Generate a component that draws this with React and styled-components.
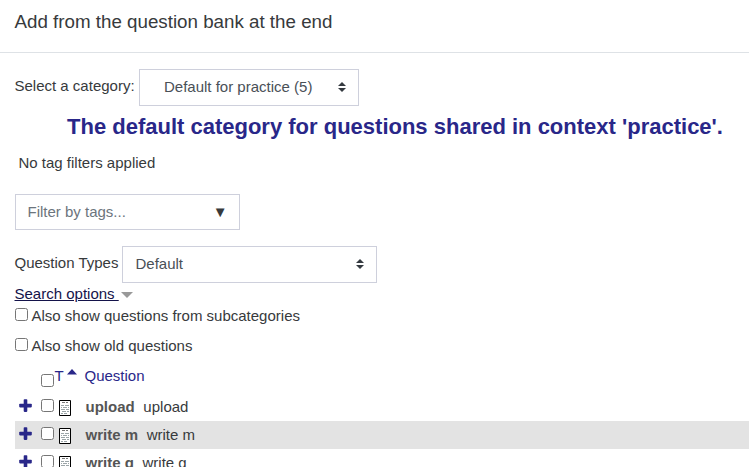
import React from "react";
import styled, { createGlobalStyle } from "styled-components";

const Global = createGlobalStyle`
  *, *::before, *::after { box-sizing: border-box; }
  body {
    margin: 0;
    background: #fff;
    color: #373a3c;
    font: 15px/22px "Liberation Sans", Arial, sans-serif;
  }
`;

const Dialog = styled.main`
  height: 467px;
  overflow: hidden;
`;

const Header = styled.header`
  height: 53px;
  padding: 8px 14.5px 0;
  border-bottom: 1px solid #dee2e6;
`;

const Title = styled.h1`
  margin: 0;
  font-size: 18.75px;
  line-height: 28px;
  font-weight: 400;
`;

const Content = styled.div`
  display: flex;
  flex-direction: column;
  padding: 16px 0 0 14.5px;
`;

const Field = styled.div`
  display: flex;
  height: 37px;
  margin-bottom: ${(p) => p.$after}px;
`;

const Label = styled.label`
  width: ${(p) => p.$width}px;
  padding-top: 6px;
  white-space: nowrap;
`;

const SelectBox = styled.div`
  display: flex;
  align-items: center;
  justify-content: space-between;
  width: ${(p) => p.$width}px;
  height: 37px;
  padding: 0 12px 1px ${(p) => p.$indent}px;
  border: 1px solid #ced0dc;
  color: #495057;
  white-space: nowrap;
`;

const Heading = styled.h2`
  margin: 0 0 12px 52.5px;
  color: #292789;
  font-size: 22px;
  line-height: 27px;
  font-weight: 700;
  white-space: nowrap;
`;

const TagStatus = styled.div`
  height: 42px;
  padding-left: 4px;
`;

const TagFilter = styled.div`
  display: flex;
  align-items: center;
  justify-content: space-between;
  width: 225px;
  height: 36px;
  margin-bottom: 16px;
  padding: 0 11px 0 12px;
  border: 1px solid #ced0dc;
  color: #6c757d;
`;

const Arrow = styled.span`
  color: #373a3c;
`;

const SearchOptions = styled.div`
  display: flex;
  align-items: center;
  height: 22px;
`;

const SearchLink = styled.a`
  color: #14134a;
  text-decoration: underline;
  white-space: pre;
`;

const CaretDown = styled.svg`
  display: block;
  margin: 2px 0 0 2px;
`;

const Option = styled.label`
  display: flex;
  height: 30px;
`;

const Check = styled.input`
  flex: none;
  width: 13px;
  height: 13px;
  margin: ${(p) => p.$top || 0}px 4px 0 0;
`;

const TableHead = styled.div`
  display: flex;
  height: 28px;
  padding-left: 26px;
  color: #292789;
`;

const TypeHead = styled.span`
  display: flex;
  width: 30px;
  margin-left: -3px;
`;

const SortUp = styled.svg`
  display: block;
  margin: 4px 0 0 3px;
`;

const Row = styled.div`
  display: flex;
  height: 28px;
  padding: 3px 0 0 4px;
  background: ${(p) => (p.$shaded ? "#e3e3e3" : "transparent")};
`;

const Plus = styled.svg`
  flex: none;
  width: 13px;
  height: 13px;
  margin: 3px 9px 0 0.5px;
`;

const DocIcon = styled.svg`
  flex: none;
  width: 12px;
  height: 16px;
  margin: 4px 14.5px 0 1px;
`;

const Name = styled.strong`
  color: #555;
  margin-right: 8.7px;
`;

const SelectArrows = () => (
  <svg width="8" height="10" viewBox="0 0 8 10">
    <path d="M0 4 4 0l4 4zM0 6l4 4 4-4z" fill="#343a40" />
  </svg>
);

const EssayIcon = () => (
  <DocIcon viewBox="0 0 12 16">
    <path d="M.5.5h11v15H.5z" fill="#fff" stroke="#000" />
    <path d="M3 2.5h3m1 0h2" stroke="#777" />
    <path
      d="M2 5.5h3m1 0h4M2 7.5h1m1 0h4m1 0h1M2 9.5h4m1 0h3M3 11.5h4m1 0h2M2 13.5h2m1 0h3"
      stroke="#9ba5a8"
    />
  </DocIcon>
);

const questions = [
  { name: "upload", text: "upload" },
  { name: "write m", text: "write m" },
  { name: "write g", text: "write g" },
];

export default function App() {
  return (
    <Dialog>
      <Global />
      <Header>
        <Title>Add from the question bank at the end</Title>
      </Header>
      <Content>
        <Field $after={7}>
          <Label $width={124.5}>Select a category:</Label>
          <SelectBox $width={220} $indent={24}>
            Default for practice (5)
            <SelectArrows />
          </SelectBox>
        </Field>
        <Heading>
          The default category for questions shared in context 'practice'.
        </Heading>
        <TagStatus>No tag filters applied</TagStatus>
        <TagFilter>
          Filter by tags...
          <Arrow>▼</Arrow>
        </TagFilter>
        <Field $after={0}>
          <Label $width={107.5}>Question Types</Label>
          <SelectBox $width={255} $indent={12.5}>
            Default
            <SelectArrows />
          </SelectBox>
        </Field>
        <SearchOptions>
          <SearchLink>{"Search options "}</SearchLink>
          <CaretDown width="12" height="6" viewBox="0 0 12 6">
            <path d="M0 0h12L6 6z" fill="#999" />
          </CaretDown>
        </SearchOptions>
        <Option>
          <Check type="checkbox" $top={3} />
          Also show questions from subcategories
        </Option>
        <Option>
          <Check type="checkbox" $top={3} />
          Also show old questions
        </Option>
        <TableHead>
          <Check type="checkbox" $top={9} />
          <TypeHead>
            T
            <SortUp width="10" height="6" viewBox="0 0 10 6">
              <path d="M0 5.5 5 0l5 5.5z" fill="#292789" />
            </SortUp>
          </TypeHead>
          Question
        </TableHead>
        {questions.map((q, i) => (
          <Row key={q.name} $shaded={i % 2 === 1}>
            <Plus viewBox="0 0 13 13" fill="#292789">
              <rect x="4.7" y="0.3" width="3.6" height="12.6" rx="0.8" />
              <rect x="0.2" y="4.8" width="12.6" height="3.6" rx="0.8" />
            </Plus>
            <Check type="checkbox" $top={3} />
            <EssayIcon />
            <Name>{q.name}</Name>
            {q.text}
          </Row>
        ))}
      </Content>
    </Dialog>
  );
}
